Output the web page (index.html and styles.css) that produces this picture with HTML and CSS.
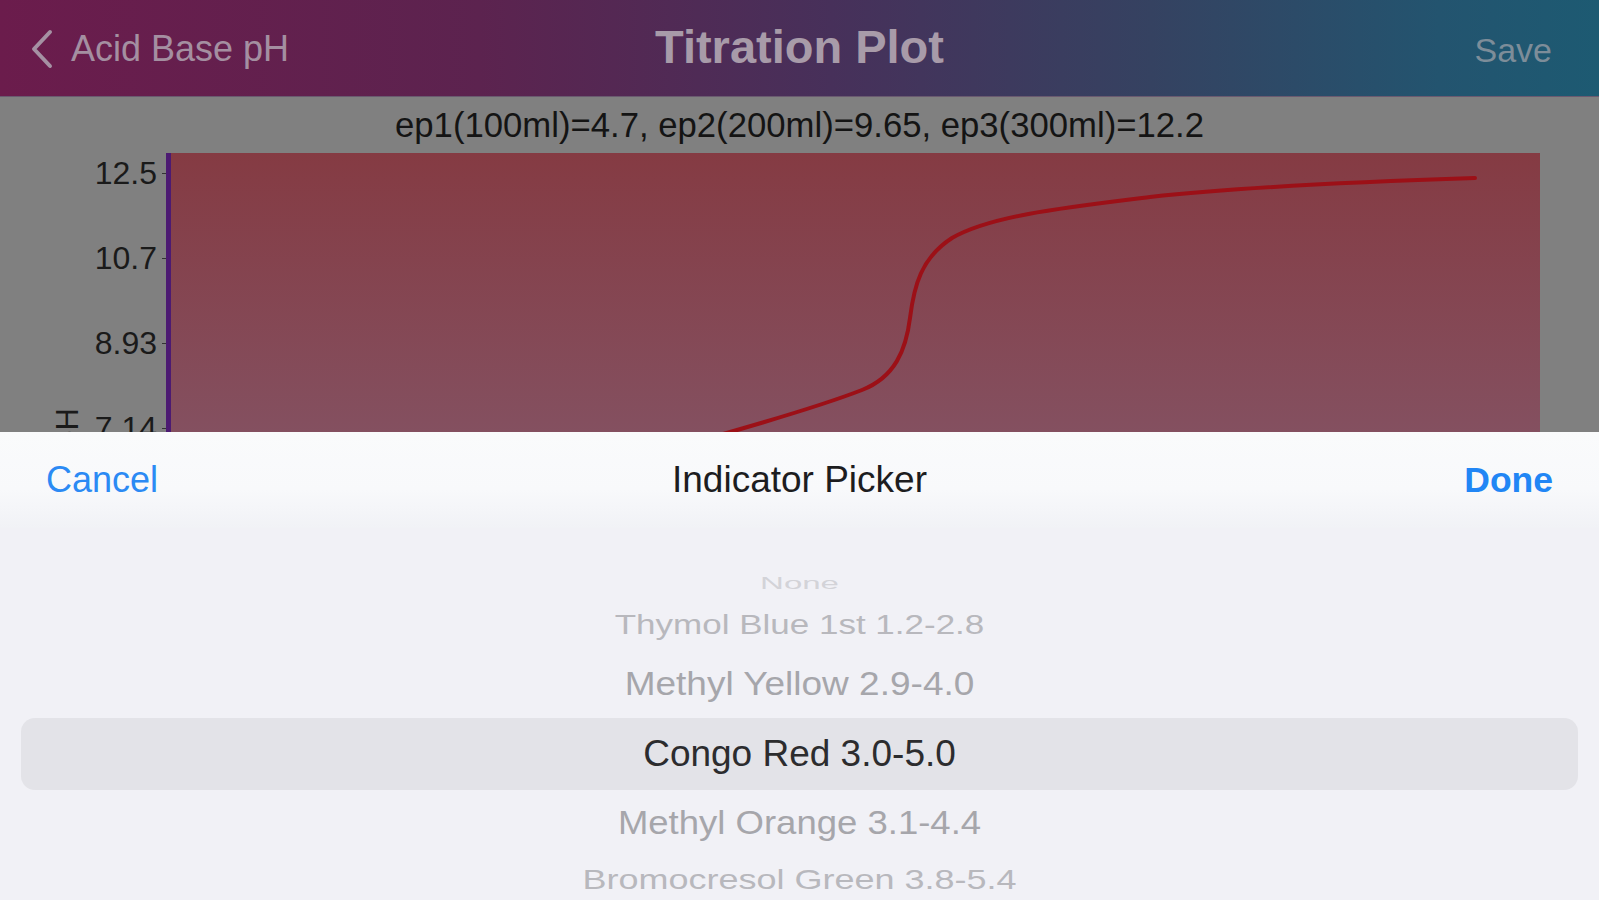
FILE: index.html
```html
<!DOCTYPE HTML>
<html>
  <head>
    <title>Titration Plot</title>
    <meta charset="utf-8" />
    <link rel="stylesheet" href="styles.css">
  </head>
  <body>
    <div class="screen">
      <header class="navbar">
        <div class="back">
          <svg class="chevron" width="24" height="40" viewBox="0 0 24 40">
            <path d="M20 3 L4 20 L20 37" fill="none" stroke="#a591a3" stroke-width="4" stroke-linecap="round" stroke-linejoin="round"/>
          </svg>
          <span>Acid Base pH</span>
        </div>
        <h1>Titration Plot</h1>
        <div class="save">Save</div>
      </header>

      <main class="chart">
        <div class="caption">ep1(100ml)=4.7, ep2(200ml)=9.65, ep3(300ml)=12.2</div>
        <div class="plot-row">
          <div class="y-axis">
            <span class="axis-title">pH</span>
            <div class="tick">12.5</div>
            <div class="tick">10.7</div>
            <div class="tick">8.93</div>
            <div class="tick">7.14</div>
          </div>
          <div class="plot">
            <svg class="curve" width="1369" height="447" viewBox="171 153 1369 447">
              <path d="M560 480 C 680 446, 800 414, 862 390 C 895 377, 906 350, 910 318 C 914 286, 921 258, 952 238 C 990 216, 1060 208, 1150 197 C 1250 186, 1380 181, 1475 178"
                    fill="none" stroke="#9c1017" stroke-width="4" stroke-linecap="round"/>
            </svg>
          </div>
        </div>
      </main>

      <section class="sheet">
        <div class="toolbar">
          <span class="cancel">Cancel</span>
          <span class="sheet-title">Indicator Picker</span>
          <span class="done">Done</span>
        </div>
        <ul class="wheel">
          <li class="row r-far"><span>None</span></li>
          <li class="row r-mid"><span>Thymol Blue 1st 1.2-2.8</span></li>
          <li class="row r-near"><span>Methyl Yellow 2.9-4.0</span></li>
          <li class="row selected"><span>Congo Red 3.0-5.0</span></li>
          <li class="row r-near r-below"><span>Methyl Orange 3.1-4.4</span></li>
          <li class="row r-mid r-last"><span>Bromocresol Green 3.8-5.4</span></li>
        </ul>
      </section>
    </div>
  </body>
</html>
```

FILE: styles.css
```css
html, body {
  margin: 0;
  padding: 0;
}
body {
  width: 1599px;
  height: 900px;
  overflow: hidden;
  font-family: "Liberation Sans", Arial, sans-serif;
}
.screen {
  position: relative;
  height: 900px;
  display: flex;
  flex-direction: column;
}

/* nav bar (dimmed by the sheet) */
.navbar {
  height: 97px;
  flex: none;
  display: grid;
  grid-template-columns: 1fr auto 1fr;
  align-items: center;
  padding: 0 30px;
  background: linear-gradient(90deg, #6b1c4c 0%, #5c234f 30%, #47305a 52%, #354261 72%, #23546f 90%, #1d5a72 100%);
  border-bottom: 1px solid #6a5a70;
  box-sizing: border-box;
}
.back {
  display: flex;
  align-items: center;
  gap: 17px;
  color: #a48fa1;
  font-size: 36px;
  margin-top: 2px;
}
.chevron {
  display: block;
}
.navbar h1 {
  margin: 0 0 4px;
  font-size: 47px;
  font-weight: bold;
  color: #a89ba9;
}
.save {
  justify-self: end;
  font-size: 34px;
  color: #7d8d99;
  margin: 4px 17px 0 0;
}

/* chart area */
.chart {
  flex: 1;
  background: #808080;
}
.caption {
  height: 56px;
  line-height: 56px;
  text-align: center;
  font-size: 34.7px;
  color: #141414;
}
.plot-row {
  display: flex;
  height: 460px;
}
.y-axis {
  position: relative;
  width: 166px;
  flex: none;
  display: flex;
  flex-direction: column;
  gap: 45px;
}
.tick {
  position: relative;
  height: 40px;
  line-height: 40px;
  text-align: right;
  padding-right: 9px;
  font-size: 32px;
  color: #1a1a1a;
}
.tick::after {
  content: "";
  position: absolute;
  right: 0;
  top: 20px;
  width: 4px;
  height: 1px;
  background: #333;
}
.axis-title {
  position: absolute;
  left: 52px;
  top: 255px;
  writing-mode: vertical-rl;
  transform: rotate(180deg);
  font-size: 31px;
  line-height: 31px;
  color: #1a1a1a;
}
.plot {
  width: 1369px;
  flex: none;
  border-left: 5px solid #4c1a72;
  background: linear-gradient(180deg, #853b43 0px, #845060 280px, #845262 460px);
}
.curve {
  display: block;
}

/* picker sheet */
.sheet {
  position: absolute;
  left: 0;
  right: 0;
  top: 432px;
  bottom: 0;
  background: #f1f1f6;
}
.toolbar {
  height: 96px;
  display: grid;
  grid-template-columns: 1fr auto 1fr;
  align-items: center;
  padding: 0 46px;
  background: linear-gradient(180deg, #fafbfc 0%, #f8f9fb 60%, #f1f2f6 100%);
}
.cancel {
  font-size: 36px;
  color: #2b8af4;
}
.sheet-title {
  font-size: 37px;
  color: #1d1d1f;
}
.done {
  justify-self: end;
  font-size: 35.5px;
  font-weight: bold;
  color: #2186f5;
}
.wheel {
  list-style: none;
  margin: 0;
  padding: 38px 0 0;
}
.row {
  display: flex;
  align-items: center;
  justify-content: center;
  font-size: 36px;
}
.row span {
  display: block;
}
.r-far {
  height: 34px;
  color: #d3d3d8;
}
.r-far span {
  font-size: 33px;
  transform: scaleY(0.5);
}
.r-mid {
  height: 50px;
  color: #b8b8bd;
}
.r-mid span {
  font-size: 35px;
  transform: scaleY(0.78);
}
.r-near {
  height: 68px;
  color: #a6a6ab;
}
.r-near span {
  font-size: 37px;
  transform: scaleY(0.9);
}
.r-below {
  height: 66px;
}
.r-below span {
  font-size: 36.5px;
}
.r-last {
  height: 48px;
}
.r-last span {
  font-size: 36px;
}
.selected {
  height: 72px;
  margin: 0 21px;
  border-radius: 14px;
  background: #e3e3e8;
  color: #2c2c2e;
}
.selected span {
  font-size: 37px;
}
```
